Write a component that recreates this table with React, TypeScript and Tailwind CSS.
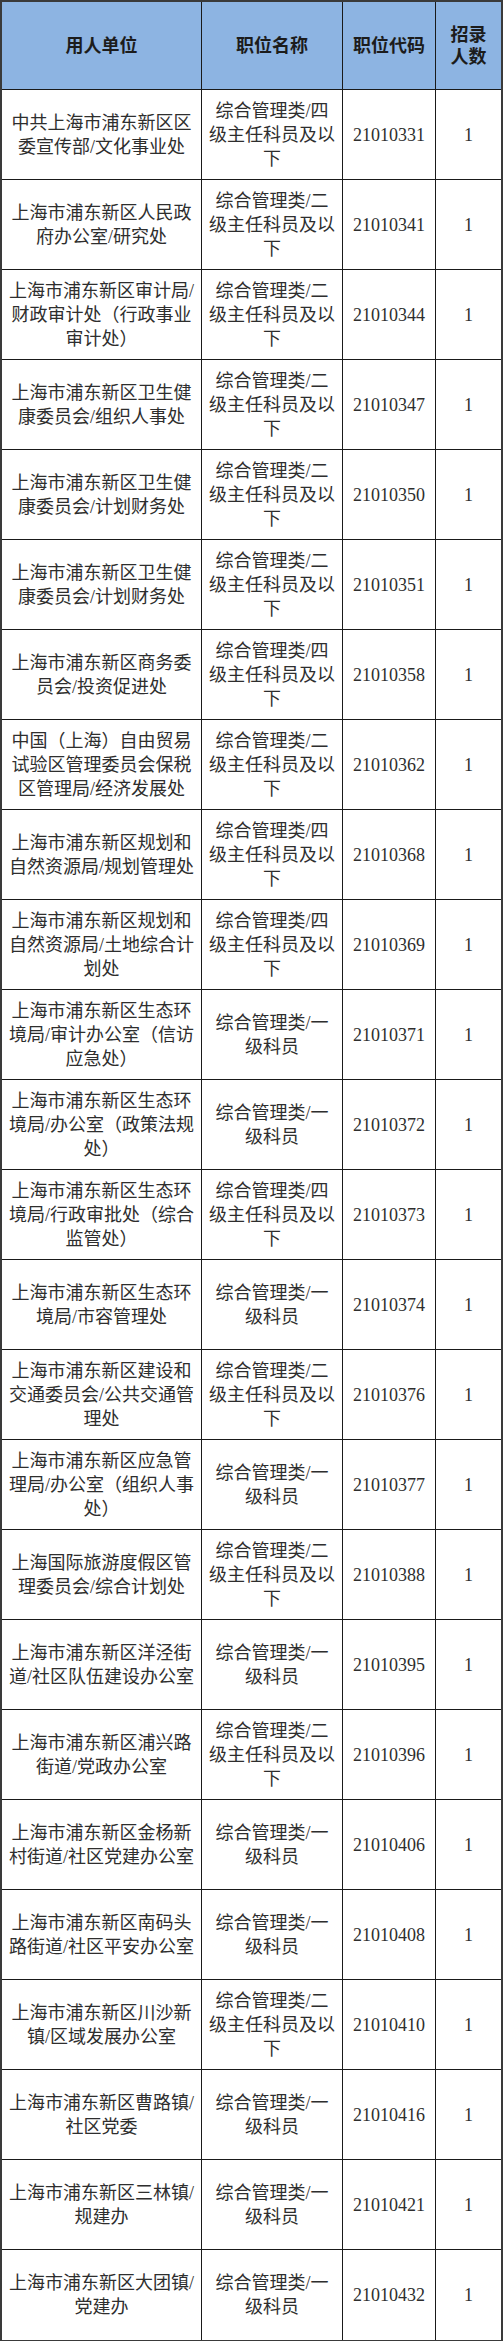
const rows: [string, string, string, string][] = [
  ['中共上海市浦东新区区委宣传部/文化事业处', '综合管理类/四级主任科员及以下', '21010331', '1'],
  ['上海市浦东新区人民政府办公室/研究处', '综合管理类/二级主任科员及以下', '21010341', '1'],
  ['上海市浦东新区审计局/财政审计处（行政事业审计处）', '综合管理类/二级主任科员及以下', '21010344', '1'],
  ['上海市浦东新区卫生健康委员会/组织人事处', '综合管理类/二级主任科员及以下', '21010347', '1'],
  ['上海市浦东新区卫生健康委员会/计划财务处', '综合管理类/二级主任科员及以下', '21010350', '1'],
  ['上海市浦东新区卫生健康委员会/计划财务处', '综合管理类/二级主任科员及以下', '21010351', '1'],
  ['上海市浦东新区商务委员会/投资促进处', '综合管理类/四级主任科员及以下', '21010358', '1'],
  ['中国（上海）自由贸易试验区管理委员会保税区管理局/经济发展处', '综合管理类/二级主任科员及以下', '21010362', '1'],
  ['上海市浦东新区规划和自然资源局/规划管理处', '综合管理类/四级主任科员及以下', '21010368', '1'],
  ['上海市浦东新区规划和自然资源局/土地综合计划处', '综合管理类/四级主任科员及以下', '21010369', '1'],
  ['上海市浦东新区生态环境局/审计办公室（信访应急处）', '综合管理类/一级科员', '21010371', '1'],
  ['上海市浦东新区生态环境局/办公室（政策法规处）', '综合管理类/一级科员', '21010372', '1'],
  ['上海市浦东新区生态环境局/行政审批处（综合监管处）', '综合管理类/四级主任科员及以下', '21010373', '1'],
  ['上海市浦东新区生态环境局/市容管理处', '综合管理类/一级科员', '21010374', '1'],
  ['上海市浦东新区建设和交通委员会/公共交通管理处', '综合管理类/二级主任科员及以下', '21010376', '1'],
  ['上海市浦东新区应急管理局/办公室（组织人事处）', '综合管理类/一级科员', '21010377', '1'],
  ['上海国际旅游度假区管理委员会/综合计划处', '综合管理类/二级主任科员及以下', '21010388', '1'],
  ['上海市浦东新区洋泾街道/社区队伍建设办公室', '综合管理类/一级科员', '21010395', '1'],
  ['上海市浦东新区浦兴路街道/党政办公室', '综合管理类/二级主任科员及以下', '21010396', '1'],
  ['上海市浦东新区金杨新村街道/社区党建办公室', '综合管理类/一级科员', '21010406', '1'],
  ['上海市浦东新区南码头路街道/社区平安办公室', '综合管理类/一级科员', '21010408', '1'],
  ['上海市浦东新区川沙新镇/区域发展办公室', '综合管理类/二级主任科员及以下', '21010410', '1'],
  ['上海市浦东新区曹路镇/社区党委', '综合管理类/一级科员', '21010416', '1'],
  ['上海市浦东新区三林镇/规建办', '综合管理类/一级科员', '21010421', '1'],
  ['上海市浦东新区大团镇/党建办', '综合管理类/一级科员', '21010432', '1'],
];

const cell = 'flex items-center justify-center text-center';

export default function App() {
  return (
    <div className="w-[503px] border-2 border-[#3a3a3a] bg-white font-['Liberation_Serif','Noto_Sans_CJK_SC',serif]">
      <div className="grid h-[88px] grid-cols-[200px_141px_93px_65px] border-b border-[#1a1a1a] bg-[#8db4e2] text-[18px] font-bold leading-[22px] text-[#1c1c1c]">
        <div className={`${cell} border-r border-[#1a1a1a] px-[4px]`}>用人单位</div>
        <div className={`${cell} border-r border-[#1a1a1a] px-[6px]`}>职位名称</div>
        <div className={`${cell} border-r border-[#1a1a1a] px-[2px]`}>职位代码</div>
        <div className={`${cell} px-[8px]`}>招录人数</div>
      </div>
      {rows.map(([unit, name, code, count], i) => (
        <div
          key={code}
          className={`grid h-[90px] grid-cols-[200px_141px_93px_65px] text-[18px] leading-[24px] text-[#2e2e2e] ${
            i < rows.length - 1 ? 'border-b border-[#1a1a1a]' : 'h-[89px]'
          }`}
        >
          <div className={`${cell} border-r border-[#1a1a1a] px-[4px]`}>{unit}</div>
          <div className={`${cell} border-r border-[#1a1a1a] px-[6px]`}>{name}</div>
          <div className={`${cell} border-r border-[#1a1a1a] px-[2px]`}>{code}</div>
          <div className={`${cell} px-[8px]`}>{count}</div>
        </div>
      ))}
    </div>
  );
}
